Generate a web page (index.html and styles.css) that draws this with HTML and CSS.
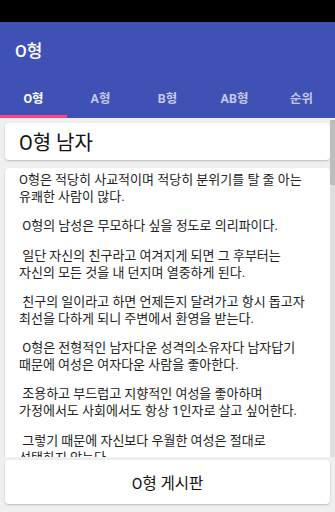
FILE: index.html
```html
<!DOCTYPE html>
<html lang="ko">
<head>
    <meta charset="UTF-8">
    <meta name="viewport" content="width=device-width, initial-scale=1.0">
    <title>O형</title>
    <link rel="stylesheet" href="styles.css">
</head>
<body>

    <div class="status-bar"></div>

    <!-- App bar + tabs -->
    <div class="app-bar">
        <div class="toolbar">O형</div>
        <div class="tabs">
            <div class="tab active">O형</div>
            <div class="tab">A형</div>
            <div class="tab">B형</div>
            <div class="tab">AB형</div>
            <div class="tab">순위</div>
        </div>
    </div>

    <div class="content">
        <div class="scroll">
            <div class="card title-card">O형 남자</div>

            <div class="card text-card">
                <p>O형은 적당히 사교적이며 적당히 분위기를 탈 줄 아는<br>유쾌한 사람이 많다.</p>
                <p>&nbsp;O형의 남성은 무모하다 싶을 정도로 의리파이다.</p>
                <p>&nbsp;일단 자신의 친구라고 여겨지게 되면 그 후부터는<br>자신의 모든 것을 내 던지며 열중하게 된다.</p>
                <p>&nbsp;친구의 일이라고 하면 언제든지 달려가고 항시 돕고자<br>최선을 다하게 되니 주변에서 환영을 받는다.</p>
                <p>&nbsp;O형은 전형적인 남자다운 성격의소유자다 남자답기<br>때문에 여성은 여자다운 사람을 좋아한다.</p>
                <p>&nbsp;조용하고 부드럽고 지향적인 여성을 좋아하며<br>가정에서도 사회에서도 항상 1인자로 살고 싶어한다.</p>
                <p>&nbsp;그렇기 때문에 자신보다 우월한 여성은 절대로<br>선택하지 않는다.</p>
            </div>

            <!-- scrollbar overlay -->
            <div class="scrollbar"><div class="thumb"></div></div>
        </div>

        <div class="card board-btn">O형 게시판</div>
    </div>

</body>
</html>
```

FILE: styles.css
```css
* {
    box-sizing: border-box;
    margin: 0;
    padding: 0;
}

body {
    width: 335px;
    height: 512px;
    overflow: hidden;
    font-family: Roboto, "Noto Sans CJK KR", sans-serif;
    background: #efefef;
    display: flex;
    flex-direction: column;
}

.status-bar {
    height: 22px;
    background: #000;
}

.app-bar {
    background: #3f51b5;
    color: #fff;
}

.toolbar {
    height: 54px;
    display: flex;
    align-items: center;
    padding-left: 15px;
    font-size: 17px;
    font-weight: 500;
}

.tabs {
    display: flex;
    height: 42px;
}

.tab {
    flex: 1;
    display: flex;
    justify-content: center;
    align-items: center;
    font-size: 12.5px;
    font-weight: 700;
    color: rgba(255, 255, 255, 0.7);
    border-bottom: 3px solid transparent;
    padding-top: 3px;
}

.tab.active {
    color: #fff;
    border-bottom-color: #ff4081;
}

.content {
    flex: 1;
    display: flex;
    flex-direction: column;
    min-height: 0;
}

.scroll {
    position: relative;
    flex: 1;
    overflow: hidden;
    padding: 5px 5px 0;
}

.card {
    background: #fff;
    border-radius: 4px;
    box-shadow: 0 1px 2px rgba(0, 0, 0, 0.22);
}

.title-card {
    height: 37px;
    display: flex;
    align-items: center;
    padding-left: 14px;
    font-size: 20px;
    color: #111;
}

.text-card {
    margin-top: 8px;
    padding: 3px 0 0 14px;
    font-size: 13px;
    line-height: 17px;
    color: #222;
    white-space: nowrap;
}

.text-card p {
    margin-bottom: 12.3px;
}

.scrollbar {
    position: absolute;
    top: 2px;
    right: 0;
    bottom: 0;
    width: 5px;
    background: #dedede;
}

.thumb {
    height: 65px;
    background: #bdbdbd;
}

.board-btn {
    height: 44px;
    margin: 3px 5px 8px;
    display: flex;
    justify-content: center;
    align-items: center;
    font-size: 15.5px;
    color: #111;
}
```
